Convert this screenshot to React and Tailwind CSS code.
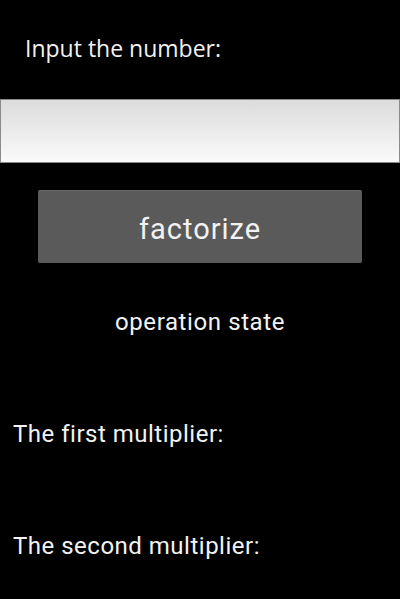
export default function App() {
  return (
    <div className="h-[599px] w-[400px] overflow-hidden bg-black text-[#f2f2f2]" style={{ fontFamily: 'Roboto, sans-serif' }}>
      <p className="pl-[25px] pt-[33px] text-[23px] leading-[30px] font-['Open_Sans',sans-serif]">Input the number:</p>
      <div className="mt-[36px] h-[64px] w-full border border-[#8a8a8a] bg-gradient-to-b from-[#dcdcdc] to-[#fafafa]" />
      <div className="mt-[27px] flex justify-center">
        <button className="flex h-[73px] w-[324px] items-center justify-center rounded-[2px] border-t border-[#6c6c6c] bg-[#5a5a5a] pt-[5px] text-[29px] tracking-[1px] text-[#f2f2f2]">
          factorize
        </button>
      </div>
      <p className="mt-[44px] text-center text-[24px] leading-[30px] tracking-[0.6px]">operation state</p>
      <p className="mt-[82px] pl-[13px] text-[24px] leading-[30px] tracking-[0.5px]">The first multiplier:</p>
      <p className="mt-[82px] pl-[13px] text-[24px] leading-[30px] tracking-[0.5px]">The second multiplier:</p>
    </div>
  );
}
